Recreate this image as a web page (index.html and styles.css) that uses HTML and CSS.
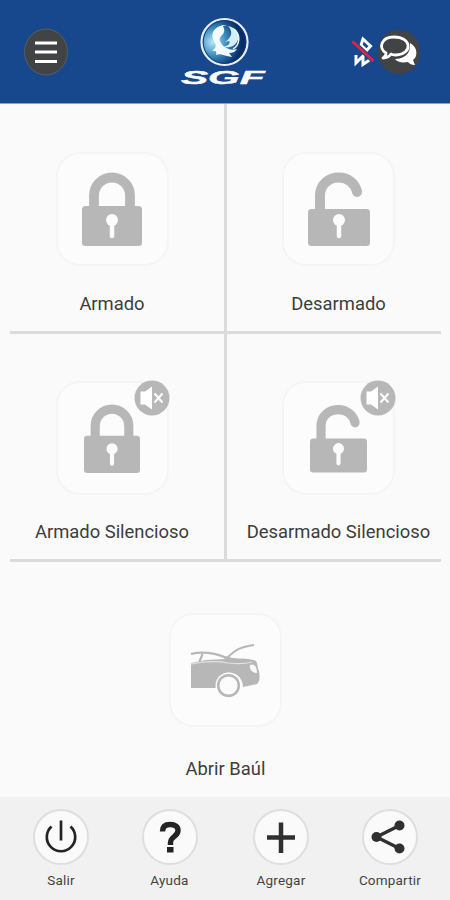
FILE: index.html
```html
<!DOCTYPE html>
<html lang="es">
<head>
<meta charset="utf-8">
<meta name="viewport" content="width=device-width, initial-scale=1">
<title>SGF</title>
<link rel="stylesheet" href="styles.css">
</head>
<body>
<svg class="defs" aria-hidden="true">
  <defs>
    <radialGradient id="orb" cx=".25" cy=".5" r=".72">
      <stop offset="0" stop-color="#b9e8f6"/><stop offset=".4" stop-color="#3b8fc0"/><stop offset=".85" stop-color="#092d6b"/>
    </radialGradient>
    <symbol id="locked" viewBox="0 0 60 74">
      <path d="M12 36V23.500a18 18 0 0 1 36 0V36" fill="none" stroke="#b7b7b7" stroke-width="9.800"/>
      <rect y="34" width="60" height="40" rx="3.500" fill="#b7b7b7"/>
      <circle cx="30" cy="48" r="6" fill="#fcfcfc"/>
      <path d="M30 50V64" stroke="#fcfcfc" stroke-width="4.500" stroke-linecap="round"/>
    </symbol>
    <symbol id="unlocked" viewBox="0 0 62 74">
      <path d="M12 39V23.500C12 12 21 5.500 31 5.500c9 0 16 6 18 14" fill="none" stroke="#b7b7b7" stroke-width="10"/>
      <circle cx="49" cy="20" r="5" fill="#b7b7b7"/>
      <rect y="37" width="62" height="37" rx="3.500" fill="#b7b7b7"/>
      <circle cx="31" cy="48" r="6" fill="#fcfcfc"/>
      <path d="M31 50V64" stroke="#fcfcfc" stroke-width="4.500" stroke-linecap="round"/>
    </symbol>
    <symbol id="mute" viewBox="0 0 36 36">
      <circle cx="18" cy="18" r="17.500" fill="#b7b7b7"/>
      <path d="M6.500 11.500H11l7-5v23l-7-5H6.500z" fill="#fff"/>
      <path d="M20.500 13.500l8 9m0-9l-8 9" stroke="#fff" stroke-width="2"/>
    </symbol>
  </defs>
</svg>
<div class="app">
  <header class="topbar">
    <button class="menu" aria-label="Menú">
      <svg width="46" height="48" viewBox="0 0 46 48">
        <ellipse cx="23" cy="24" rx="21.500" ry="23" fill="#414345" stroke="#575d66"/>
        <path d="M12 15h22M12 24h22M12 33.500h22" stroke="#fff" stroke-width="2.800"/>
      </svg>
    </button>
    <svg class="logo" width="92" height="74" viewBox="0 0 92 74">
      <circle cx="45.500" cy="26" r="23" fill="url(#orb)" stroke="#e8edf6" stroke-width="2.200"/>
      <circle cx="45.500" cy="26" r="21.300" fill="none" stroke="#123b7b"/>
      <path d="M48 9C39 8 31 15 34 23c1 4 4 5 2 9l-3 3c4-1 5 1 4 4 4-2 7 0 11 1l5 1-3-4c3 0 6-1 8-4-6 2-13-1-16-6-4-6 2-7 3-11 1-3-1-5-1-6z" fill="#f2fbfe"/>
      <path d="M49 10c9 2 13 9 9 16-3 5-9 6-14 5 5-1 8-4 6-6l-4 1c6-4 9-10 3-16z" fill="#d5edf7"/>
      <path d="M55 13c7 6 6 16-1 20" fill="none" stroke="#e8f5fb" stroke-width="1.500"/>
      <text class="brand" transform="translate(2 68) scale(2.320 1)">SGF</text>
    </svg>
    <div class="status">
      <svg width="26" height="32" viewBox="0 0 26 32">
        <path d="M12 3l7.500 7-4 4.500L10 9zM5 19v8l7-7v8.500l6.500-4.500" fill="none" stroke="#fff" stroke-width="3"/>
        <path d="M1.500 5.500l21 19.500" stroke="#17478d" stroke-width="5"/>
        <path d="M1.500 5.500l21 19.500" stroke="#dc2445" stroke-width="2.800"/>
      </svg>
      <svg width="44" height="46" viewBox="0 0 44 46">
        <ellipse cx="22" cy="23" rx="21.300" ry="22.300" fill="#414345"/>
        <path d="M33 14c8 4 8 14 3 17l2 5c-4 0-6-2-7-3-6 1-11 0-13-3 9 0 16-5 15-16z" fill="#fff"/>
        <path d="M9 24c-8-5-5-16 8-16 18 0 19 17 2 18-3 0-4 0-5-1-2 3-5 4-8 4 2-1 3-3 3-5z" fill="#414345" stroke="#fff" stroke-width="2.800" stroke-linejoin="round"/>
      </svg>
    </div>
  </header>
  <main class="actions">
    <section class="cell right-line">
      <div class="tile"><svg width="60" height="74"><use href="#locked"/></svg></div>
      <p class="label">Armado</p>
    </section>
    <section class="cell">
      <div class="tile"><svg width="62" height="74"><use href="#unlocked"/></svg></div>
      <p class="label">Desarmado</p>
    </section>
    <section class="cell right-line second">
      <div class="tile silent"><svg width="56" height="69"><use href="#locked"/></svg><svg class="badge" width="36" height="36"><use href="#mute"/></svg></div>
      <p class="label">Armado Silencioso</p>
    </section>
    <section class="cell second">
      <div class="tile silent"><svg width="57" height="69"><use href="#unlocked"/></svg><svg class="badge" width="36" height="36"><use href="#mute"/></svg></div>
      <p class="label">Desarmado Silencioso</p>
    </section>
    <section class="cell trunk">
      <div class="tile">
        <svg width="70" height="56" viewBox="0 0 70 56">
          <path d="M0 12c12-3 24-1 36 4" fill="none" stroke="#b7b7b7" stroke-width="2.200"/>
          <path d="M11.500 12L8 21" stroke="#b7b7b7" stroke-width="2.200"/>
          <path d="M0 21l15-3 19-1c-3-3-7-4-10-5 7 1 12 3 18 4 8 1 17 0 23 3 2 3 1 6 3 10 1 6 1 10-2 13l-14 3c-1-19-26-19-27 1H0z" fill="#b7b7b7"/>
          <path d="M0 22c14-3 27-3 37-1 8 1 17 1 24-1" fill="none" stroke="#e2e2e2" stroke-width="1.200"/>
          <path d="M36 16c9-9 14-11 27-13" fill="none" stroke="#b7b7b7" stroke-width="2"/>
          <path d="M59 23c4-2 7 2 7 8-5 0-8-4-7-8z" fill="#f9f9f9"/>
          <circle cx="37.500" cy="43.500" r="13" fill="#fcfcfc"/>
          <circle cx="37.500" cy="43.500" r="10.300" fill="#fcfcfc" stroke="#b7b7b7" stroke-width="2.500"/>
        </svg>
      </div>
      <p class="label">Abrir Baúl</p>
    </section>
  </main>
  <nav class="bottombar">
    <button class="nav-item">
      <svg width="56" height="56" viewBox="0 0 56 56"><circle class="disc" cx="28" cy="28" r="27"/><path d="M18.500 17.500A14.200 14.200 0 1 0 37.500 17.500M28 11.500v20" fill="none" stroke="#242424" stroke-width="2.700"/></svg>
      <span class="caption">Salir</span>
    </button>
    <button class="nav-item">
      <svg width="56" height="56" viewBox="0 0 56 56"><circle class="disc" cx="28" cy="28" r="27"/><path d="M20.500 22.500c0-5 3-7 7.500-7 5.500 0 8 2.500 8 6 0 6-7.500 6-7.500 12V36" fill="none" stroke="#242424" stroke-width="5.400"/><path d="M25 38h6.500v5.500H25z" fill="#242424"/></svg>
      <span class="caption">Ayuda</span>
    </button>
    <button class="nav-item">
      <svg width="56" height="56" viewBox="0 0 56 56"><circle class="disc" cx="28" cy="28" r="27"/><path d="M14 28.500h28M28 13.500v30.500" stroke="#303030" stroke-width="4.500"/></svg>
      <span class="caption">Agregar</span>
    </button>
    <button class="nav-item">
      <svg width="56" height="56" viewBox="0 0 56 56"><circle class="disc" cx="28" cy="28" r="27"/><path d="M37.500 16.500L14.500 28l23 11.500" fill="none" stroke="#303030" stroke-width="3.400"/><circle cx="37.500" cy="16.500" r="5" fill="#303030"/><circle cx="14.500" cy="28" r="5" fill="#303030"/><circle cx="37.500" cy="39.500" r="5" fill="#303030"/></svg>
      <span class="caption">Compartir</span>
    </button>
  </nav>
</div>
</body>
</html>
```
FILE: styles.css
```css
* { box-sizing: border-box; }
body { margin: 0; background: #fafafa; font-family: Roboto, "Liberation Sans", sans-serif; color: #3d3d3d; }
button { padding: 0; border: 0; background: none; font: inherit; color: inherit; }
svg { display: block; }
.defs { position: absolute; width: 0; height: 0; }
.app { display: grid; grid-template-rows: 104px 693px 103px; width: 450px; height: 900px; overflow: hidden; }

.topbar { display: grid; grid-template-columns: 1fr 92px 1fr; align-items: center; padding: 0 30px 0 23px; background: #17478d; border-bottom: 1px solid #8ba2c6; }
.topbar .logo { margin: 3px 0 0 3px; overflow: visible; }
.brand { font: italic 700 17.500px "Liberation Sans", sans-serif; fill: #fff; stroke: #fff; stroke-width: .4px; }
.status { display: flex; align-items: center; justify-content: flex-end; }

.actions { display: grid; grid-template-columns: 215px 216px; grid-template-rows: 230px 228px 235px; padding: 0 10px; }
.cell { display: flex; flex-direction: column; align-items: center; padding-top: 48px; border-bottom: 3px solid #dbdbdb; }
.second { padding-top: 47px; }
.right-line { border-right: 3px solid #dbdbdb; width: 217px; padding-right: 10px; }
.cell:not(.right-line):not(.trunk) { padding-left: 11px; }
.trunk { grid-column: 1 / -1; border: 0; padding-top: 51px; }
.tile { position: relative; display: grid; place-items: center; width: 113px; height: 114px; border: 2px solid #f5f5f5; border-radius: 24px; background: #fcfcfc; }
.badge { position: absolute; top: -3px; right: -3px; }
.label { margin: 26px 0 0; font-size: 18.400px; line-height: 24px; white-space: nowrap; }
.second .label { margin-top: 25px; }
.trunk .label { margin-top: 30px; }

.bottombar { display: grid; grid-template-columns: 108px 109px 114px 104px; padding: 12px 7px 0; background: #f1f1f1; }
.nav-item { display: flex; flex-direction: column; align-items: center; gap: 6px; }
.disc { fill: #fafafa; stroke: #dedede; stroke-width: 2px; }
.caption { font-size: 13.500px; line-height: 18px; letter-spacing: .2px; color: #444; }
```
